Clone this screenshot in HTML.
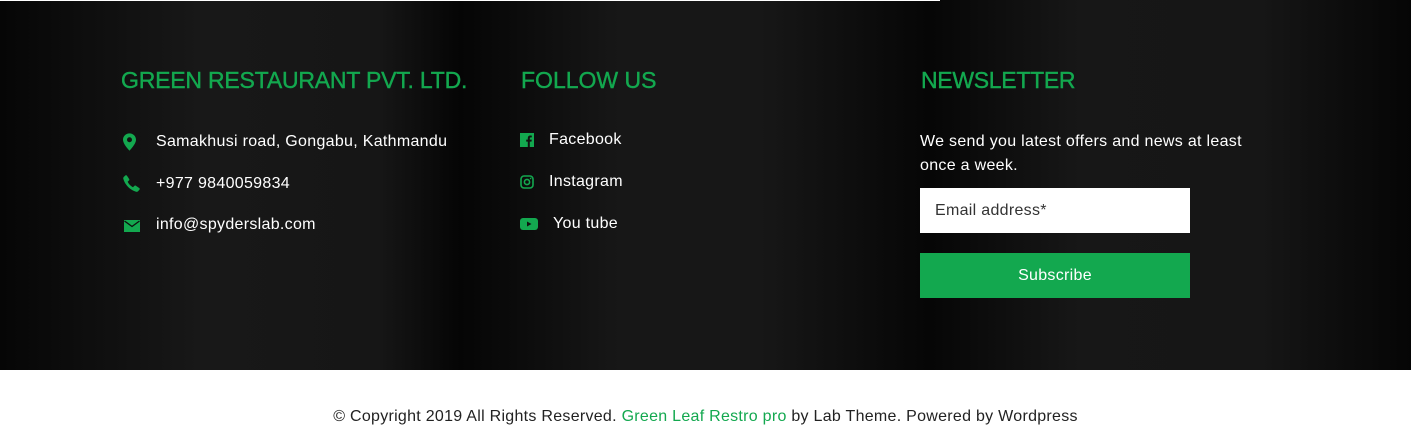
<!DOCTYPE html>
<html><head><meta charset="utf-8"><style>
*{margin:0;padding:0;box-sizing:border-box}
body{width:1411px;height:427px;background:#fff;font-family:"Liberation Sans",sans-serif;position:relative;overflow:hidden}
.ft{position:absolute;left:0;top:0;width:1411px;height:370px;
background:linear-gradient(90deg,#060606 0px,#181818 200px,#161616 380px,#050505 460px,#171717 620px,#171717 760px,#060606 930px,#171717 1080px,#161616 1260px,#050505 1411px)}
.topline{position:absolute;left:0;top:0;width:940px;height:1px;background:#fff}
h3{position:absolute;top:67px;color:#13a84f;font-size:23px;font-weight:normal;letter-spacing:0px;-webkit-text-stroke:0.4px #13a84f}
.t{position:absolute;color:#fff;font-size:16px;letter-spacing:0.3px}
svg{position:absolute}
.inp{position:absolute;left:920px;top:188px;width:270px;height:45px;background:#fff;color:#333;font-size:16px;padding:14px 0 0 15px;letter-spacing:0.3px}
.btn{position:absolute;left:920px;top:253px;width:270px;height:45px;background:#13a84f;color:#fff;font-size:16px;text-align:center;line-height:45px;letter-spacing:0.3px}
.copy{position:absolute;top:408px;left:0;width:1411px;text-align:center;font-size:16px;color:#222;letter-spacing:0.28px}
.copy span{color:#13a84f}
</style></head><body>
<div class="ft"></div><div class="topline"></div>
<h3 style="left:121px;letter-spacing:-0.2px">GREEN RESTAURANT PVT. LTD.</h3>
<h3 style="left:521px">FOLLOW US</h3>
<h3 style="left:921px;letter-spacing:-0.3px">NEWSLETTER</h3>

<svg style="left:123px;top:133px" width="13" height="18" viewBox="0 0 12 16"><path d="M6 0C2.7 0 0 2.6 0 5.9 0 10 6 16 6 16s6-6 6-10.1C12 2.6 9.3 0 6 0zm0 8.2A2.3 2.3 0 1 1 6 3.6a2.3 2.3 0 0 1 0 4.6z" fill="#13a84f"/></svg>
<div class="t" style="left:156px;top:133px">Samakhusi road, Gongabu, Kathmandu</div>
<svg style="left:123px;top:175px" width="17" height="17" viewBox="0 0 16 16"><path d="M3.6 0.5l2.2 3.3c.3.5.2 1-.2 1.4L4.4 6.4c.9 2 2.8 4 5 5.1l1.3-1.3c.4-.4 1-.4 1.4-.1l3.3 2.2c.4.3.5.9.2 1.3l-1.3 1.6c-.5.6-1.3.8-2 .6C6.7 14.2 1.8 9.3.3 3.7.1 3 .3 2.2.9 1.7L2.3.4c.4-.3 1-.3 1.3.1z" fill="#13a84f"/></svg>
<div class="t" style="left:156px;top:175px">+977 9840059834</div>
<svg style="left:124px;top:220px" width="16" height="12" viewBox="0 0 16 12"><rect width="16" height="12" fill="#13a84f"/><path d="M0.5 1l7.5 5.5L15.5 1" stroke="#0e0e0e" stroke-width="1.3" fill="none"/></svg>
<div class="t" style="left:156px;top:216px">info@spyderslab.com</div>

<svg style="left:520px;top:133px" width="14" height="14" viewBox="0 0 14 14"><rect width="14" height="14" fill="#13a84f"/><path d="M9.8 14V8.6h1.7l.3-2H9.8V5.4c0-.6.2-1 1-1h1V2.6c-.2 0-.8-.1-1.5-.1-1.5 0-2.5.9-2.5 2.6v1.5H6.2v2h1.6V14z" fill="#111"/></svg>
<div class="t" style="left:549px;top:131px">Facebook</div>
<svg style="left:520px;top:175px" width="14" height="14" viewBox="0 0 14 14"><rect x="1" y="1" width="12" height="12" rx="3" stroke="#13a84f" stroke-width="1.6" fill="none"/><circle cx="7" cy="7" r="2.6" stroke="#13a84f" stroke-width="1.6" fill="none"/><circle cx="10.6" cy="3.4" r=".8" fill="#13a84f"/></svg>
<div class="t" style="left:549px;top:173px">Instagram</div>
<svg style="left:520px;top:218px" width="18" height="12" viewBox="0 0 18 12"><rect width="18" height="12" rx="3" fill="#13a84f"/><path d="M7 3.5v5l4.5-2.5z" fill="#111"/></svg>
<div class="t" style="left:553px;top:215px">You tube</div>

<div class="t" style="left:920px;top:130px;line-height:24px;width:345px">We send you latest offers and news at least once a week.</div>
<div class="inp">Email address*</div>
<div class="btn">Subscribe</div>
<div class="copy">© Copyright 2019 All Rights Reserved. <span>Green Leaf Restro pro</span> by Lab Theme. Powered by Wordpress</div>
</body></html>
